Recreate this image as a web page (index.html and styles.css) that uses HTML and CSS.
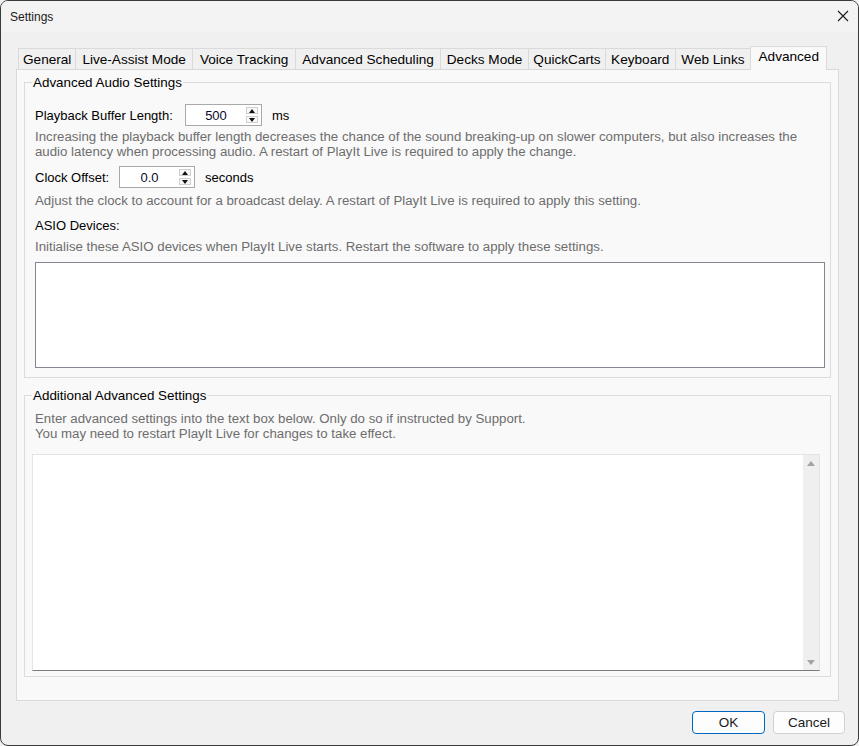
FILE: index.html
```html
<!DOCTYPE html>
<html>
<head>
<meta charset="utf-8">
<title>Settings</title>
<link rel="stylesheet" href="styles.css">
</head>
<body>
<div class="window">
  <div class="titlebar">
    <span class="title">Settings</span>
    <svg class="close" width="12" height="12" viewBox="0 0 12 12"><path d="M1 1 L11 11 M11 1 L1 11" stroke="#1a1a1a" stroke-width="1.1" fill="none"/></svg>
  </div>
  <div class="body">
    <div class="tabs">
      <div class="tab tab-narrow">General</div>
      <div class="tab">Live-Assist Mode</div>
      <div class="tab tab-wide">Voice Tracking</div>
      <div class="tab">Advanced Scheduling</div>
      <div class="tab">Decks Mode</div>
      <div class="tab tab-narrow">QuickCarts</div>
      <div class="tab tab-snug">Keyboard</div>
      <div class="tab tab-snug">Web Links</div>
      <div class="tab active">Advanced</div>
    </div>
    <div class="panel">
      <fieldset class="group group-audio">
        <legend>Advanced Audio Settings</legend>
        <div class="group-inner audio-inner">
          <div class="row row-buffer">
            <span class="label label-buffer">Playback Buffer Length:</span>
            <div class="spin spin-buffer">
              <span class="spin-val">500</span>
              <span class="spin-btns"><i class="spin-btn"><i class="arrow-up"></i></i><i class="spin-btn"><i class="arrow-down"></i></i></span>
            </div>
            <span class="unit">ms</span>
          </div>
          <p class="desc desc-buffer">Increasing the playback buffer length decreases the chance of the sound breaking-up on slower computers, but also increases the<br>audio latency when processing audio. A restart of PlayIt Live is required to apply the change.</p>
          <div class="row row-clock">
            <span class="label label-clock">Clock Offset:</span>
            <div class="spin spin-clock">
              <span class="spin-val">0.0</span>
              <span class="spin-btns"><i class="spin-btn"><i class="arrow-up"></i></i><i class="spin-btn"><i class="arrow-down"></i></i></span>
            </div>
            <span class="unit">seconds</span>
          </div>
          <p class="desc desc-clock">Adjust the clock to account for a broadcast delay. A restart of PlayIt Live is required to apply this setting.</p>
          <p class="label-line">ASIO Devices:</p>
          <p class="desc desc-asio">Initialise these ASIO devices when PlayIt Live starts. Restart the software to apply these settings.</p>
          <div class="listbox"></div>
        </div>
      </fieldset>
      <fieldset class="group group-extra">
        <legend>Additional Advanced Settings</legend>
        <div class="group-inner extra-inner">
          <p class="desc desc-extra">Enter advanced settings into the text box below. Only do so if instructed by Support.<br>You may need to restart PlayIt Live for changes to take effect.</p>
          <div class="textbox">
            <div class="textarea"></div>
            <div class="scrollbar">
              <i class="sb-up"></i>
              <i class="sb-down"></i>
            </div>
          </div>
        </div>
      </fieldset>
    </div>
    <div class="footer">
      <button class="btn btn-ok">OK</button>
      <button class="btn btn-cancel">Cancel</button>
    </div>
  </div>
</div>
</body>
</html>
```

FILE: styles.css
```css
html, body {
  margin: 0;
  padding: 0;
  background: #f0f0f0;
}

.window {
  width: 859px;
  height: 746px;
  box-sizing: border-box;
  border: 1px solid #3a3a3a;
  border-radius: 8px;
  overflow: hidden;
  background: #f0f0f0;
  display: flex;
  flex-direction: column;
  font-family: "Liberation Sans", Arial, sans-serif;
  font-size: 13px;
  color: #000;
}

.titlebar {
  height: 31px;
  flex: none;
  display: flex;
  align-items: center;
  justify-content: space-between;
  padding: 0 9px 0 9px;
  background: #f3f3f3;
}

.title {
  font-size: 12px;
  color: #1b1b1b;
}

.close {
  display: block;
  margin-right: 0;
  margin-top: -1px;
}

.body {
  flex: 1;
  display: flex;
  flex-direction: column;
  padding: 14px 19px 0 15px;
}

.tabs {
  display: flex;
  align-items: flex-end;
  padding-left: 3px;
  margin-bottom: -1px;
  position: relative;
  z-index: 1;
}

.tab {
  height: 21px;
  box-sizing: border-box;
  margin-bottom: 1px;
  padding: 0 6px;
  border: 1px solid #dadada;
  border-bottom: none;
  margin-left: -1px;
  background: #f0f0f0;
  line-height: 21px;
  font-size: 13.6px;
  white-space: nowrap;
}

.tab.tab-narrow { padding: 0 4px; }
.tab.tab-wide { padding: 0 7px; }
.tab.tab-snug { padding: 0 5.5px; }

.tab.active {
  height: 24px;
  margin-bottom: 0;
  background: #f9f9f9;
  line-height: 20px;
  padding: 0 7.5px 0 7.5px;
}

.panel {
  border: 1px solid #d9d9d9;
  background: #f9f9f9;
  padding: 5px 7px 23px 7px;
}

.group {
  margin: 0;
  padding: 0;
  border: 1px solid #dcdcdc;
  min-width: 0;
}

.group legend {
  margin-left: 7px;
  padding: 0 1px;
  line-height: 15px;
  font-size: 13.4px;
}

.group-extra {
  margin-top: 10px;
}

.group-inner p {
  margin: 0;
}

.audio-inner {
  padding: 14px 5px 9px 10px;
}

.row {
  display: flex;
  align-items: center;
  height: 22px;
}

.label-buffer {
  width: 150px;
  flex: none;
}

.label-clock {
  width: 84px;
  flex: none;
}

.spin {
  height: 22px;
  box-sizing: border-box;
  border: 1px solid #a9a9a9;
  background: #fff;
  display: flex;
  align-items: center;
  padding-right: 3px;
}

.spin-buffer { width: 77px; }
.spin-clock { width: 76px; }

.spin-val {
  flex: 1;
  text-align: center;
  color: #0a0a2a;
}

.spin-btns {
  width: 12px;
  height: 16px;
  display: flex;
  flex-direction: column;
  justify-content: space-between;
}

.spin-btn {
  height: 7px;
  box-sizing: border-box;
  border: 1px solid #cfcfcf;
  background: #f7f7f7;
  display: flex;
  align-items: center;
  justify-content: center;
}

.arrow-up, .arrow-down {
  display: block;
  width: 0;
  height: 0;
  border-left: 3.5px solid transparent;
  border-right: 3.5px solid transparent;
}

.arrow-up { border-bottom: 4px solid #111; }
.arrow-down { border-top: 4px solid #111; }

.unit {
  margin-left: 10px;
}

.desc {
  color: #6d6d6d;
  line-height: 15px;
  font-size: 13.25px;
  white-space: nowrap;
}

.desc-buffer { margin-top: 3px !important; }
.row-clock { margin-top: 7px; }
.desc-clock { margin-top: 5px !important; }
.label-line { margin-top: 10px !important; line-height: 15px; }
.desc-asio { margin-top: 6px !important; }

.listbox {
  margin-top: 8px;
  height: 106px;
  box-sizing: border-box;
  border: 1px solid #828790;
  background: #fff;
}

.extra-inner {
  padding: 8px 10px 5px 7px;
}

.desc-extra {
  padding-left: 3px;
}

.textbox {
  margin-top: 13px;
  height: 217px;
  box-sizing: border-box;
  border: 1px solid #e3e3e3;
  border-bottom: 1px solid #7a7a7a;
  background: #fff;
  display: flex;
}

.textarea {
  flex: 1;
}

.scrollbar {
  width: 16px;
  background: #efefef;
  display: flex;
  flex-direction: column;
  justify-content: space-between;
  align-items: center;
  padding: 6px 0 5px;
}

.sb-up, .sb-down {
  display: block;
  width: 0;
  height: 0;
  border-left: 4.5px solid transparent;
  border-right: 4.5px solid transparent;
}

.sb-up { border-bottom: 5px solid #a3a3a3; }
.sb-down { border-top: 5px solid #a3a3a3; }

.footer {
  display: flex;
  justify-content: flex-end;
  gap: 8px;
  padding-top: 10px;
  margin-right: -6px;
}

.btn {
  height: 23px;
  box-sizing: border-box;
  border-radius: 4px;
  font-family: "Liberation Sans", Arial, sans-serif;
  font-size: 13.5px;
  color: #1a1a1a;
  padding: 0;
  background: #fdfdfd;
}

.btn-ok {
  width: 73px;
  border: 1px solid #0067c0;
}

.btn-cancel {
  width: 72px;
  border: 1px solid #d0d0d0;
}
```
